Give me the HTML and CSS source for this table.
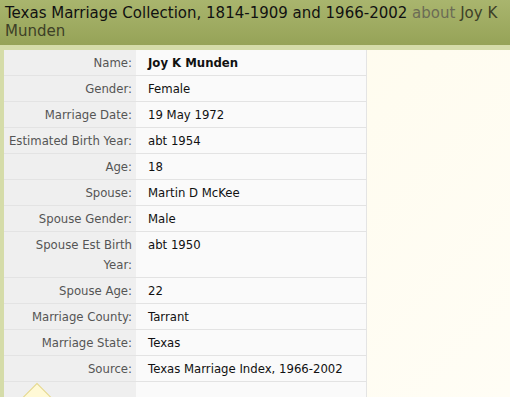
FILE: index.html
```html
<!DOCTYPE html>
<html>
<head>
<meta charset="utf-8">
<link rel="stylesheet" href="styles.css">
</head>
<body>
<div class="page">
  <header class="head">
    <h1 class="title">Texas Marriage Collection, 1814-1909 and 1966-2002 <span class="about">about</span> <span class="who">Joy K Munden</span></h1>
  </header>
  <div class="main">
    <table class="rec">
      <tr><th>Name:</th><td class="b">Joy K Munden</td></tr>
      <tr><th>Gender:</th><td>Female</td></tr>
      <tr><th>Marriage Date:</th><td>19 May 1972</td></tr>
      <tr><th>Estimated Birth Year:</th><td>abt 1954</td></tr>
      <tr><th>Age:</th><td>18</td></tr>
      <tr><th>Spouse:</th><td>Martin D McKee</td></tr>
      <tr><th>Spouse Gender:</th><td>Male</td></tr>
      <tr><th>Spouse Est Birth Year:</th><td>abt 1950</td></tr>
      <tr><th>Spouse Age:</th><td>22</td></tr>
      <tr><th>Marriage County:</th><td>Tarrant</td></tr>
      <tr><th>Marriage State:</th><td>Texas</td></tr>
      <tr><th>Source:</th><td>Texas Marriage Index, 1966-2002</td></tr>
      <tr class="last"><th></th><td></td></tr>
    </table>
    <div class="tip"></div>
  </div>
</div>
</body>
</html>
```
FILE: styles.css
```css
html, body { margin: 0; padding: 0; }
body {
  width: 510px;
  height: 397px;
  overflow: hidden;
  background: linear-gradient(135deg, #fffbea 0%, #fffdf5 100%);
  font-family: "DejaVu Sans", Verdana, sans-serif;
}
.page { position: relative; }
.head {
  background: linear-gradient(#a9b56e, #96a357);
  padding: 4px 5px 5px 5px;
  height: 36px;
  border-bottom: 5px solid #d5dca9;
}
.title {
  margin: 0;
  font-family: "DejaVu Sans", Verdana, sans-serif;
  font-weight: normal;
  font-size: 15px;
  line-height: 18px;
  color: #111;
}
.about { color: #6b6b55; }
.who { color: #3d4027; }
.main {
  position: relative;
  border-left: 4px solid #d5dca9;
  height: 347px;
  overflow: hidden;
}
.rec {
  border-collapse: collapse;
  font-size: 11.7px;
  border-right: 1px solid #e4e4e4;
}
.rec th {
  width: 124px;
  background: #efefef;
  color: #555;
  font-weight: normal;
  text-align: right;
  padding: 3px 4px 2px 4px;
  line-height: 20px;
  border-bottom: 1px solid #e3e3e3;
  vertical-align: top;
}
.rec td {
  width: 206px;
  background: #fafafa;
  color: #111;
  padding: 3px 12px 2px 12px;
  line-height: 20px;
  border-bottom: 1px solid #e3e3e3;
  vertical-align: top;
}
.rec td.b { font-weight: bold; }
.rec tr.last th, .rec tr.last td { height: 15px; padding: 0; border-bottom: none; }
.tip {
  position: absolute;
  left: 23px;
  top: 337px;
  width: 18px;
  height: 18px;
  background: #fff9d6;
  border: 1px solid #e2d68e;
  transform: rotate(45deg);
}
```
